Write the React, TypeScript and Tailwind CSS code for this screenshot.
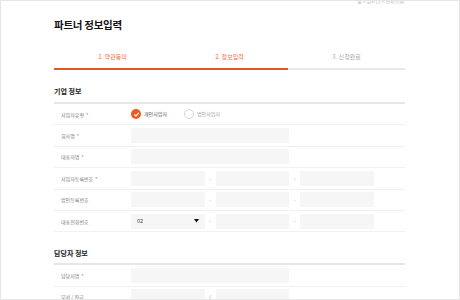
import React from "react";

const font = { fontFamily: '"Noto Sans CJK KR", "Noto Sans", sans-serif' };

const Req = () => <span className="text-[#f0612d] ml-[2px]">*</span>;

const Box = ({ w = "w-[158px]", children }: { w?: string; children?: React.ReactNode }) => (
  <div className={`${w} h-[15px] bg-[#f6f6f6] flex items-center`}>{children}</div>
);

const Sep = ({ ch = "-" }: { ch?: string }) => (
  <div className="w-[11px] flex justify-center text-[5px] text-[#888]">{ch}</div>
);

const Row = ({
  label,
  required,
  children,
}: {
  label: string;
  required?: boolean;
  children: React.ReactNode;
}) => (
  <div className="h-[21.4px] border-b border-[#f1f1f1] flex items-center">
    <div className="w-[77px] pl-[7px] text-[5px] text-[#777] leading-none">
      {label}
      {required && <Req />}
    </div>
    <div className="flex items-center">{children}</div>
  </div>
);

const Triple = () => (
  <>
    <Box w="w-[73.5px]" />
    <Sep />
    <Box w="w-[73.5px]" />
    <Sep />
    <Box w="w-[73.5px]" />
  </>
);

export default function App() {
  const steps = [
    { label: "1. 약관동의", active: true },
    { label: "2. 정보입력", active: true },
    { label: "3. 신청완료", active: false },
  ];

  return (
    <div
      className="w-[460px] h-[300px] border border-[#e6e6e6] bg-white overflow-hidden"
      style={font}
    >
      <div className="w-[351px] ml-[53px]">
        <div className="h-[3px] overflow-hidden flex justify-end items-end pr-[1px]">
          <span className="text-[5px] leading-[4px] text-[#bbb]">홈 &gt; 파트너 &gt; 정보입력</span>
        </div>

        <h1 className="mt-[13px] h-[16px] leading-[16px] text-[10.5px] font-bold text-[#111] tracking-tight">
          파트너 정보입력
        </h1>

        <div className="mt-[17px] flex">
          {steps.map((s) => (
            <div
              key={s.label}
              className={`flex-1 text-center text-[6px] leading-[14px] ${
                s.active ? "text-[#f06a38]" : "text-[#aaa]"
              }`}
            >
              {s.label}
            </div>
          ))}
        </div>
        <div className="mt-[4px] flex h-[2px]">
          <div className="w-2/3 bg-[#e9541f]" />
          <div className="w-1/3 bg-[#e8e8e8]" />
        </div>

        <h2 className="mt-[16px] h-[10px] leading-[10px] text-[7px] font-bold text-[#222]">
          기업 정보
        </h2>
        <div className="mt-[6px] h-[2px] bg-[#e6e6e6]" />

        <Row label="사업자유형" required>
          <div className="flex items-center gap-[3px]">
            <div className="w-[10px] h-[10px] rounded-full bg-[#ee5a24] flex items-center justify-center">
              <svg width="7" height="7" viewBox="0 0 12 12">
                <path d="M2.5 6.2 L5 8.6 L9.6 3.6" fill="none" stroke="#fff" strokeWidth="2" strokeLinecap="round" strokeLinejoin="round" />
              </svg>
            </div>
            <span className="text-[5px] text-[#555]">개인사업자</span>
          </div>
          <div className="flex items-center gap-[3px] ml-[17px]">
            <div className="w-[10px] h-[10px] rounded-full border border-[#d6d6d6] bg-white" />
            <span className="text-[5px] text-[#999]">법인사업자</span>
          </div>
        </Row>
        <Row label="회사명" required>
          <Box />
        </Row>
        <Row label="대표자명" required>
          <Box />
        </Row>
        <Row label="사업자등록번호" required>
          <Triple />
        </Row>
        <Row label="법인등록번호">
          <Triple />
        </Row>
        <Row label="대표전화번호">
          <Box w="w-[73.5px]">
            <div className="flex-1 flex items-center justify-between pl-[6px] pr-[6px]">
              <span className="text-[5.5px] text-[#444]">02</span>
              <svg width="5" height="4" viewBox="0 0 10 8">
                <path d="M0 0 L10 0 L5 7 Z" fill="#111" />
              </svg>
            </div>
          </Box>
          <Sep />
          <Box w="w-[73.5px]" />
          <Sep />
          <Box w="w-[73.5px]" />
        </Row>

        <h2 className="mt-[16px] h-[10px] leading-[10px] text-[7px] font-bold text-[#222]">
          담당자 정보
        </h2>
        <div className="mt-[5px] h-[2px] bg-[#e6e6e6]" />

        <Row label="담당자명" required>
          <Box />
        </Row>
        <Row label="부서 / 직급">
          <Box w="w-[73.5px]" />
          <Sep ch="/" />
          <Box w="w-[73.5px]" />
        </Row>
      </div>
    </div>
  );
}
